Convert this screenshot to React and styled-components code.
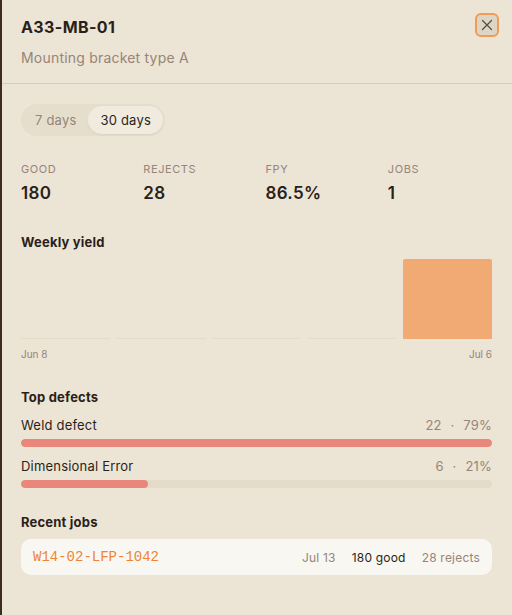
import React from "react";
import styled, { createGlobalStyle } from "styled-components";

const Global = createGlobalStyle`
  html, body { margin: 0; padding: 0; background: #ece4d4; }
  body { font-family: Inter, "Noto Sans", sans-serif; }
`;

const Panel = styled.div`
  width: 512px;
  height: 615px;
  box-sizing: border-box;
  background: #ece4d4;
  border-left: 2px solid #3d2c24;
  color: #2a1f1a;
  overflow: hidden;
`;

const Header = styled.header`
  display: flex;
  justify-content: space-between;
  align-items: flex-start;
  padding: 17px 13px 16px 19px;
  border-bottom: 1px solid #d6ccbb;
`;

const TitleBlock = styled.div`
  display: flex;
  flex-direction: column;
  gap: 12px;
`;

const Title = styled.h1`
  margin: 0;
  font-size: 16px;
  font-weight: 700;
  line-height: 20px;
  letter-spacing: 0.4px;
`;

const Subtitle = styled.div`
  font-size: 14px;
  line-height: 18px;
  color: #978579;
  letter-spacing: 0.2px;
`;

const CloseButton = styled.button`
  width: 24px;
  height: 24px;
  box-sizing: border-box;
  margin-top: -4px;
  border: 2px solid #f39a55;
  border-radius: 6px;
  background: #ddd5c6;
  display: flex;
  align-items: center;
  justify-content: center;
  padding: 0;
  color: #5a4d45;
`;

const Body = styled.div`
  padding: 20px 20px 0 19px;
  display: flex;
  flex-direction: column;
`;

const Segments = styled.div`
  display: inline-flex;
  align-self: flex-start;
  background: #e6decd;
  border-radius: 16px;
  padding: 2px;
`;

const Segment = styled.button`
  border: none;
  font-family: inherit;
  font-size: 13px;
  letter-spacing: 0.2px;
  height: 28px;
  padding: 0 12px;
  border-radius: 14px;
  background: ${(p) => (p.$active ? "#f1ebdf" : "transparent")};
  color: ${(p) => (p.$active ? "#2a1f1a" : "#978579")};
  box-shadow: ${(p) => (p.$active ? "0 1px 2px rgba(80,60,40,0.08)" : "none")};
`;

const Stats = styled.div`
  display: grid;
  grid-template-columns: repeat(4, 1fr);
  column-gap: 18px;
  margin-top: 26px;
`;

const Stat = styled.div`
  display: flex;
  flex-direction: column;
  gap: 7px;
`;

const StatLabel = styled.div`
  font-size: 11px;
  letter-spacing: 0.6px;
  color: #978579;
  line-height: 14px;
`;

const StatValue = styled.div`
  font-size: 17px;
  font-weight: 600;
  line-height: 20px;
  letter-spacing: 0.3px;
`;

const SectionTitle = styled.h2`
  margin: ${(p) => p.$mt || "0"} 0 0 0;
  font-size: 13px;
  font-weight: 700;
  line-height: 18px;
  letter-spacing: 0.2px;
`;

const Chart = styled.div`
  display: grid;
  grid-template-columns: repeat(5, 1fr);
  gap: 6px;
  height: 80px;
  align-items: end;
  margin-top: 8px;
`;

const Bar = styled.div`
  background: ${(p) => (p.$h > 2 ? "#f2aa74" : "#e4dccb")};
  border-radius: 2px 2px 0 0;
`;

const AxisLabels = styled.div`
  display: flex;
  justify-content: space-between;
  font-size: 10px;
  color: #978579;
  margin-top: 8px;
  line-height: 14px;
`;

const DefectList = styled.div`
  display: flex;
  flex-direction: column;
  gap: 10px;
  margin-top: 10px;
`;

const Defect = styled.div`
  display: flex;
  flex-direction: column;
  gap: 5px;
`;

const DefectRow = styled.div`
  display: flex;
  justify-content: space-between;
  font-size: 13px;
  line-height: 18px;
  letter-spacing: 0.2px;
`;

const DefectCount = styled.span`
  color: #978579;
  word-spacing: 5px;
`;

const Track = styled.div`
  height: 8px;
  border-radius: 4px;
  background: #e4dbca;
  overflow: hidden;
`;

const Fill = styled.div`
  height: 100%;
  background: #e9877a;
  border-radius: 4px;
`;

const JobCard = styled.div`
  margin-top: 8px;
  background: #f9f7f1;
  border-radius: 10px;
  height: 36px;
  display: flex;
  align-items: center;
  padding: 0 12px;
  font-size: 12px;
  letter-spacing: 0.2px;
`;

const JobId = styled.span`
  font-family: "Liberation Mono", "DejaVu Sans Mono", monospace;
  font-size: 14px;
  color: #f08436;
  flex: 1;
  letter-spacing: 0;
`;

const JobMeta = styled.span`
  color: ${(p) => (p.$dark ? "#2a1f1a" : "#978579")};
  margin-left: ${(p) => p.$ml || "0"};
`;

const weeks = [1, 1, 1, 1, 80];

export default function App() {
  return (
    <>
      <Global />
      <Panel>
        <Header>
          <TitleBlock>
            <Title>A33-MB-01</Title>
            <Subtitle>Mounting bracket type A</Subtitle>
          </TitleBlock>
          <CloseButton aria-label="Close">
            <svg width="12" height="12" viewBox="0 0 12 12" fill="none" stroke="#5a4d45" strokeWidth="1.3" strokeLinecap="round">
              <path d="M1.5 1.5 L10.5 10.5 M10.5 1.5 L1.5 10.5" />
            </svg>
          </CloseButton>
        </Header>
        <Body>
          <Segments>
            <Segment>7 days</Segment>
            <Segment $active>30 days</Segment>
          </Segments>
          <Stats>
            <Stat><StatLabel>GOOD</StatLabel><StatValue>180</StatValue></Stat>
            <Stat><StatLabel>REJECTS</StatLabel><StatValue>28</StatValue></Stat>
            <Stat><StatLabel>FPY</StatLabel><StatValue>86.5%</StatValue></Stat>
            <Stat><StatLabel>JOBS</StatLabel><StatValue>1</StatValue></Stat>
          </Stats>
          <SectionTitle $mt="30px">Weekly yield</SectionTitle>
          <Chart>
            {weeks.map((h, i) => (
              <Bar key={i} $h={h} style={{ height: `${h}px` }} />
            ))}
          </Chart>
          <AxisLabels><span>Jun 8</span><span>Jul 6</span></AxisLabels>
          <SectionTitle $mt="27px">Top defects</SectionTitle>
          <DefectList>
            <Defect>
              <DefectRow><span>Weld defect</span><DefectCount>22 · 79%</DefectCount></DefectRow>
              <Track><Fill style={{ width: "100%" }} /></Track>
            </Defect>
            <Defect>
              <DefectRow><span>Dimensional Error</span><DefectCount>6 · 21%</DefectCount></DefectRow>
              <Track><Fill style={{ width: "27%" }} /></Track>
            </Defect>
          </DefectList>
          <SectionTitle $mt="25px">Recent jobs</SectionTitle>
          <JobCard>
            <JobId>W14-02-LFP-1042</JobId>
            <JobMeta>Jul 13</JobMeta>
            <JobMeta $dark $ml="16px">180 good</JobMeta>
            <JobMeta $ml="16px">28 rejects</JobMeta>
          </JobCard>
        </Body>
      </Panel>
    </>
  );
}
